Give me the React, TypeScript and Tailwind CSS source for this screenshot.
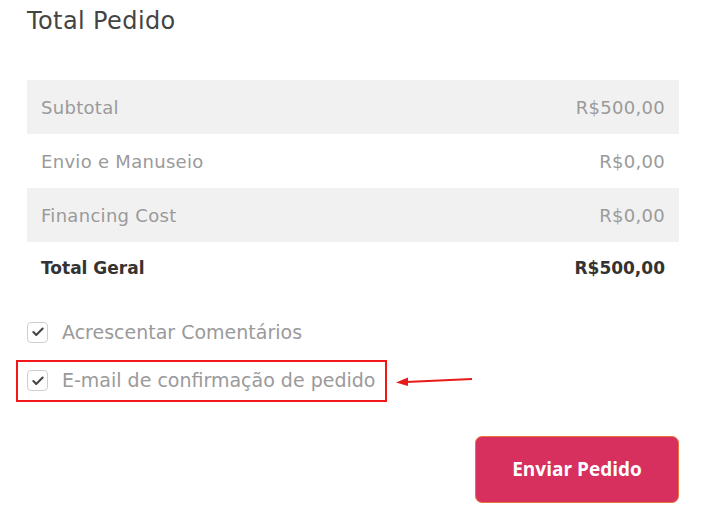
import { Check } from "lucide-react";

const rows = [
  { label: "Subtotal", value: "R$500,00", shaded: true },
  { label: "Envio e Manuseio", value: "R$0,00", shaded: false },
  { label: "Financing Cost", value: "R$0,00", shaded: true },
];

function Box() {
  return (
    <span className="flex h-[21px] w-[21px] shrink-0 items-center justify-center rounded-[4px] border border-[#cfcfcf] bg-white">
      <Check size={14} strokeWidth={3.5} className="text-[#444]" />
    </span>
  );
}

export default function App() {
  return (
    <div
      className="h-[528px] w-[714px] bg-white text-[#555]"
      style={{ fontFamily: '"DejaVu Sans", "Open Sans", sans-serif' }}
    >
      <div className="w-[679px] pl-[27px] pt-[5px]">
        <h2 className="text-[24px] leading-[32px] tracking-[0.4px] text-[#444]">Total Pedido</h2>

        {/* Summary table */}
        <div className="mt-[43px]">
          {rows.map((r) => (
            <div
              key={r.label}
              className={`flex h-[54px] items-center justify-between px-[14px] text-[18px] tracking-[0.3px] text-[#9a9a9a] ${
                r.shaded ? "bg-[#f1f1f1]" : "bg-white"
              }`}
            >
              <span>{r.label}</span>
              <span>{r.value}</span>
            </div>
          ))}
          <div className="flex h-[54px] items-center justify-between px-[14px] text-[17px] font-bold text-[#333]">
            <span>Total Geral</span>
            <span>R$500,00</span>
          </div>
        </div>

        {/* Options */}
        <div className="mt-[22px] flex items-center gap-[14px] text-[19px] text-[#9a9a9a]">
          <Box />
          <span>Acrescentar Comentários</span>
        </div>

        <div className="mt-[13px] flex items-center">
          <div className="-ml-[11px] flex h-[42px] w-[371px] items-center gap-[14px] border-2 border-[#f01818] pl-[9px] text-[19px] text-[#9a9a9a]">
            <Box />
            <span>E-mail de confirmação de pedido</span>
          </div>
          <svg width="78" height="14" viewBox="0 0 78 14" className="ml-[9px]">
            <line x1="10" y1="8" x2="76" y2="5" stroke="#e81a1a" strokeWidth="2" />
            <polygon points="0,8.5 12,3.5 12,12" fill="#e81a1a" />
          </svg>
        </div>

        <div className="mt-[34px] flex justify-end">
          <button
            className="h-[67px] w-[204px] rounded-[7px] border border-[#e8743c] bg-[#d7305f] text-[19px] font-bold text-white"
            style={{ fontFamily: '"Open Sans", sans-serif' }}
          >
            Enviar Pedido
          </button>
        </div>
      </div>
    </div>
  );
}
